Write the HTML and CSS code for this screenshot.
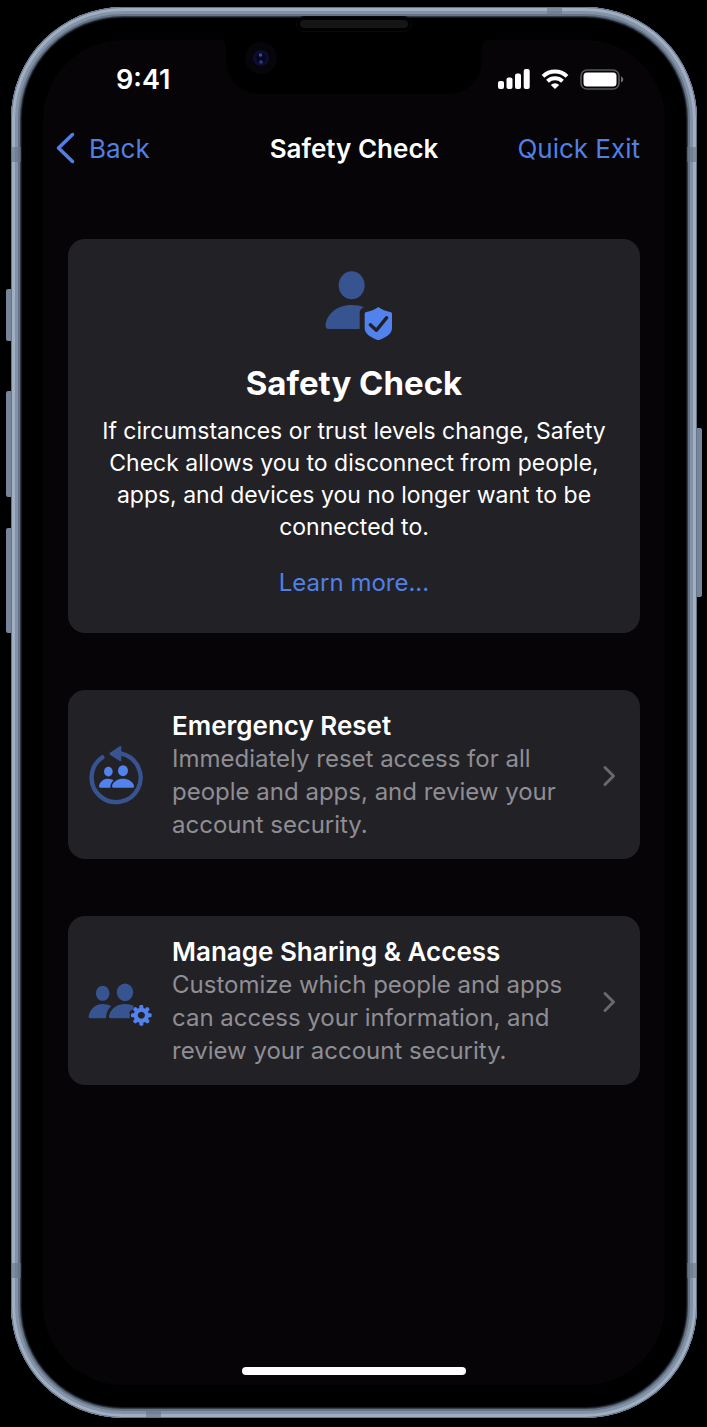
FILE: index.html
```html
<!DOCTYPE html>
<html lang="en">
<head>
<meta charset="utf-8">
<meta name="viewport" content="width=device-width, initial-scale=1">
<title>Safety Check</title>
<link rel="stylesheet" href="styles.css">
</head>
<body>
<div class="phone">
  <span class="key key-mute"></span>
  <span class="key key-up"></span>
  <span class="key key-down"></span>
  <span class="key key-power"></span>
  <span class="band band-left band-high"></span>
  <span class="band band-left band-low"></span>
  <span class="band band-right band-high"></span>
  <span class="band band-right band-low"></span>
  <span class="band band-top"></span>
  <span class="band band-bottom"></span>
  <span class="speaker"></span>

  <div class="screen">
    <svg class="notch" viewBox="0 0 270 55" aria-hidden="true">
      <path d="M0 0H270C264 0 263 3 263 10V18C263 40 249 54 227 54H43C21 54 7 40 7 18V10C7 3 6 0 0 0Z" fill="#000"/>
      <circle cx="42" cy="18" r="16" fill="#060509"/>
      <circle cx="42" cy="18" r="8" fill="#0c0e30"/>
      <circle cx="42" cy="18" r="5" fill="#060720"/>
      <circle cx="41.500" cy="15" r="1.800" fill="#49469a"/>
      <circle cx="42" cy="22" r="1.800" fill="#303a88"/>
    </svg>

    <header>
      <div class="status">
        <time>9:41</time>
        <div class="status-icons">
          <svg width="33" height="21" viewBox="0 0 33 21" fill="#fff" role="img" aria-label="Signal">
            <rect x="1" y="12" width="6" height="8" rx="2"/><rect x="9.500" y="8.500" width="6" height="11.500" rx="2"/>
            <rect x="18" y="4.500" width="6" height="15.500" rx="2"/><rect x="26.700" y="0" width="6" height="20" rx="2"/>
          </svg>
          <svg width="28" height="21" viewBox="0 0 28 21" fill="none" stroke="#fff" stroke-width="4" role="img" aria-label="Wi-Fi">
            <path d="M2 7.400A17.300 17.300 0 0 1 26 7.400"/><path d="M6.500 12.200A11 11 0 0 1 21.500 12.200"/>
            <path d="M14 20L9.800 15.900A6 6 0 0 1 18.200 15.900Z" fill="#fff" stroke="none"/>
          </svg>
          <svg width="44" height="21" viewBox="0 0 44 21" role="img" aria-label="Battery full">
            <rect x="1" y="1" width="38" height="19" rx="6" fill="none" stroke="#58575a" stroke-width="1.600"/>
            <rect x="3.500" y="3.500" width="33" height="14" rx="3.500" fill="#fff"/>
            <path d="M41 7.500C44 8.500 44 12.500 41 13.500Z" fill="#6c6b6e"/>
          </svg>
        </div>
      </div>
      <nav class="nav">
        <button class="link back" type="button">
          <svg width="20" height="32" viewBox="0 0 20 32" fill="none" stroke="currentColor" stroke-width="3.500" stroke-linecap="round" stroke-linejoin="round" aria-hidden="true"><path d="M16.500 2.500L2.500 16L16.500 29.500"/></svg>
          Back
        </button>
        <span class="nav-title">Safety Check</span>
        <button class="link exit" type="button">Quick Exit</button>
      </nav>
    </header>

    <main>
      <section class="card hero">
        <svg class="hero-icon" viewBox="42 30 240 210" aria-hidden="true">
          <ellipse cx="155" cy="76" rx="39" ry="42" fill="#375490"/>
          <path d="M87 207C79 207 76 202 77 194C81 160 114 135 154 135C169 135 181 137 192 142C183 146 179 151 179 159V207Z" fill="#375490"/>
          <path d="M235 141C245 149 259 154 271 156C275 157 276 159 276 163V205C276 222 256 234 235 241C214 234 194 222 194 205V163C194 159 195 157 199 156C211 154 225 149 235 141Z" fill="#5182ed"/>
          <path d="M211 194L229 211L260 173" fill="none" stroke="#222126" stroke-width="10" stroke-linecap="round" stroke-linejoin="round"/>
        </svg>
        <h1>Safety Check</h1>
        <p>If circumstances or trust levels change, Safety Check allows you to disconnect from people, apps, and devices you no longer want to be connected to.</p>
        <a class="link" href="#learn">Learn more...</a>
      </section>

      <a class="card row" href="#reset">
        <svg class="row-icon" viewBox="78 184 198 198" aria-hidden="true">
          <path d="M127 227A73.500 73.500 0 1 0 184 216" fill="none" stroke="#375490" stroke-width="13" stroke-linecap="round"/>
          <path d="M150 213L179 194Q184 191 184 197V235Q184 241 179 238L150 219Q146 216 150 213Z" fill="#375490"/>
          <g fill="#5182ed">
            <ellipse cx="145" cy="270" rx="13" ry="14.500"/>
            <path d="M121 318Q116 318 117 312C120 299 131 291 144 291Q154 291 161 296Q151 304 151 318Z"/>
            <ellipse cx="189" cy="267" rx="15" ry="16.500"/>
            <path d="M160 318Q155 318 156 312C160 299 173 291 189 291S218 299 222 312Q223 318 218 318Z"/>
          </g>
        </svg>
        <span class="row-text"><strong>Emergency Reset</strong><span>Immediately reset access for all people and apps, and review your account security.</span></span>
        <svg class="chevron" viewBox="0 0 14 22" aria-hidden="true"><path d="M3 2.500L11.500 11L3 19.500"/></svg>
      </a>

      <a class="card row" href="#manage">
        <svg class="row-icon" viewBox="78 186 198 198" aria-hidden="true">
          <g fill="#375490">
            <ellipse cx="128" cy="259" rx="20.500" ry="22.500"/>
            <path d="M92 334Q84 334 86 326C91 305 107 291 128 291Q143 291 154 297Q138 310 138 334Z"/>
            <ellipse cx="195" cy="256" rx="24.500" ry="26.500"/>
            <path d="M153 334Q145 334 147 326C152 305 171 291 195 291Q211 291 222 297C219 301 222 306 217 308L211 312C207 316 207 320 211 325C207 331 209 332 212 334Z"/>
          </g>
          <g fill="#5182ed">
            <path fill-rule="evenodd" d="M244 302A23 23 0 1 1 243.900 302ZM244 314.500A10.500 10.500 0 1 0 244.100 314.500Z"/>
            <g id="teeth"><rect x="238" y="294" width="12" height="12" rx="4"/><rect x="238" y="344" width="12" height="12" rx="4"/><rect x="213" y="319" width="12" height="12" rx="4"/><rect x="263" y="319" width="12" height="12" rx="4"/></g>
            <use href="#teeth" transform="rotate(45 244 325)"/>
          </g>
        </svg>
        <span class="row-text"><strong>Manage Sharing &amp; Access</strong><span>Customize which people and apps can access your information, and review your account security.</span></span>
        <svg class="chevron" viewBox="0 0 14 22" aria-hidden="true"><path d="M3 2.500L11.500 11L3 19.500"/></svg>
      </a>
    </main>
    <div class="home"></div>
  </div>
</div>
</body>
</html>
```
FILE: styles.css
```css
* { box-sizing: border-box; }

body {
  margin: 0;
  padding: 7px 10px 9px 11px;
  background: #000;
  color: #fff;
  font-family: Inter, "Liberation Sans", sans-serif;
}

button {
  padding: 0;
  border: 0;
  background: none;
  font: inherit;
}

.phone {
  position: relative;
  display: flex;
  min-height: calc(100vh - 16px);
  padding: 33px 32px;
  border-radius: 112px;
  background: #000;
  box-shadow:
    inset 0 0 0 1px #66758a,
    inset 0 0 0 4px #a0aec2,
    inset 0 0 0 7px #8492a6,
    inset 0 0 0 9px #657388,
    inset 0 0 0 10px #333d48,
    inset 0 0 0 11px #14181c;
}

.screen {
  position: relative;
  display: flex;
  flex: 1;
  flex-direction: column;
  min-width: 0;
  border-radius: 80px;
  background: #060407;
}

.notch {
  position: absolute;
  top: 0;
  left: 50%;
  width: 270px;
  height: 55px;
  transform: translateX(-50%);
}

.speaker {
  position: absolute;
  top: 10px;
  left: 50%;
  width: 114px;
  height: 14px;
  border: 3px solid #000;
  border-radius: 7px;
  outline: 1px solid #0b0b0b;
  background: #151515;
  transform: translateX(-50%);
}

.key {
  position: absolute;
  left: -5px;
  width: 5px;
  border-radius: 2px 0 0 2px;
  background: #76859a;
}
.key-mute { top: 282px; height: 52px; }
.key-up { top: 384px; height: 106px; }
.key-down { top: 521px; height: 105px; }
.key-power {
  top: 421px;
  right: -5px;
  left: auto;
  height: 169px;
  border-radius: 0 2px 2px 0;
}

.band {
  position: absolute;
  width: 10px;
  height: 15px;
  background: #66758699;
}
.band-left { left: 0; }
.band-right { right: 0; }
.band-high { top: 140px; }
.band-low { bottom: 140px; }
.band-top, .band-bottom { width: 15px; height: 9px; }
.band-top { top: 0; right: 135px; }
.band-bottom { bottom: 0; left: 135px; }

.status {
  display: flex;
  align-items: center;
  justify-content: space-between;
  height: 78px;
  padding: 0 41px 0 73px;
  font-size: 27px;
  font-weight: 600;
}

.status-icons {
  display: flex;
  gap: 11px;
}

.nav {
  display: grid;
  grid-template-columns: 1fr auto 1fr;
  align-items: center;
  height: 60px;
  padding: 0 13px;
  font-size: 26px;
}
.nav-title { font-weight: 600; }
.link { color: #5080e4; text-decoration: none; }
.back {
  display: flex;
  align-items: center;
  gap: 13px;
}
.exit { justify-self: end; margin-right: 12px; }

main {
  display: flex;
  flex: 1;
  flex-direction: column;
  gap: 57px;
  padding: 61px 25px 40px;
}

.card {
  border-radius: 17px;
  background: #222126;
}

.hero {
  display: flex;
  flex-direction: column;
  align-items: center;
  padding: 31px 22px 34px;
  font-size: 23px;
  line-height: 32px;
  text-align: center;
}
.hero-icon { width: 80px; height: 70px; }
.hero h1 {
  margin: 21px 0 10px;
  font-size: 33px;
  line-height: 44px;
}
.hero p { margin: 0 0 24px; }
.hero .link { font-size: 24px; }

.row {
  display: flex;
  align-items: center;
  gap: 20px;
  padding: 20px 24px 18px 18px;
  color: inherit;
  text-decoration: none;
}
.row-icon { flex: none; width: 66px; height: 66px; }
.row-text {
  display: flex;
  flex: 1;
  flex-direction: column;
  color: #8f8e94;
  font-size: 24px;
  line-height: 33px;
}
.row-text strong {
  color: #fff;
  font-size: 26px;
  font-weight: 600;
  line-height: 32px;
}
.chevron {
  flex: none;
  width: 14px;
  height: 22px;
  fill: none;
  stroke: #69686d;
  stroke-width: 3;
  stroke-linecap: round;
  stroke-linejoin: round;
}

.home {
  align-self: center;
  width: 36%;
  height: 8px;
  margin-bottom: 10px;
  border-radius: 4px;
  background: #fff;
}
```
